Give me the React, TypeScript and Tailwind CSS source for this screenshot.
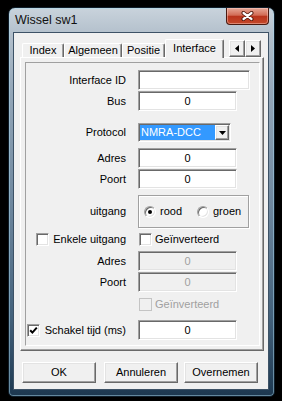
import React from "react";

const SUNKEN =
  "border border-t-[#a0a0a0] border-l-[#a0a0a0] border-b-white border-r-white shadow-[inset_1px_1px_0_#696969,inset_-1px_-1px_0_#e3e3e3]";
const RAISED =
  "border border-t-white border-l-white border-b-[#696969] border-r-[#696969] shadow-[inset_-1px_-1px_0_#a0a0a0,inset_1px_1px_0_#e3e3e3]";

function Label({ children }: { children: React.ReactNode }) {
  return (
    <div className="w-[100px] h-full flex items-center justify-end text-[11px] text-black whitespace-nowrap">
      {children}
    </div>
  );
}

function Field({
  value = "",
  wide = false,
  disabled = false,
}: {
  value?: string;
  wide?: boolean;
  disabled?: boolean;
}) {
  return (
    <div
      className={`${wide ? "w-[112px]" : "w-[99px]"} h-[20px] ${SUNKEN} ${
        disabled ? "bg-[#f0f0f0] text-[#a0a0a0]" : "bg-white text-black"
      } flex items-center justify-center text-[11px]`}
    >
      {value}
    </div>
  );
}

function Check({ checked = false, disabled = false }: { checked?: boolean; disabled?: boolean }) {
  return (
    <div
      className={`w-[13px] h-[13px] shrink-0 flex items-center justify-center ${
        disabled
          ? "border border-[#c4c4c4] bg-[#f0f0f0]"
          : "bg-white " + SUNKEN
      }`}
    >
      {checked && (
        <svg width="9" height="9" viewBox="0 0 9 9">
          <path d="M1.2 4.2 L3.4 6.6 L7.8 1.6" stroke="#000" strokeWidth="2" fill="none" />
        </svg>
      )}
    </div>
  );
}

function Radio({ checked = false }: { checked?: boolean }) {
  return (
    <div className="w-[12px] h-[12px] rounded-full shrink-0 border border-t-[#a0a0a0] border-l-[#a0a0a0] border-b-white border-r-white shadow-[inset_1px_1px_0_#696969,inset_-1px_-1px_0_#e3e3e3] bg-white flex items-center justify-center">
      {checked && <div className="w-[4px] h-[4px] rounded-full bg-black" />}
    </div>
  );
}

function Tab({ label, w }: { label: string; w: string }) {
  return (
    <div
      className={`${w} h-[14px] border-l border-t border-r border-l-white border-t-white border-r-[#696969] rounded-t-[2px] shadow-[inset_-1px_0_0_#a0a0a0] flex items-center justify-center text-[11px] text-black`}
    >
      {label}
    </div>
  );
}

function ArrowBtn({ dir }: { dir: "left" | "right" }) {
  return (
    <div className={`w-[16px] h-[17px] bg-[#f0f0f0] ${RAISED} flex items-center justify-center`}>
      <svg width="4" height="7" viewBox="0 0 4 7">
        {dir === "left" ? <path d="M4 0 L0 3.5 L4 7 Z" fill="#000" /> : <path d="M0 0 L4 3.5 L0 7 Z" fill="#000" />}
      </svg>
    </div>
  );
}

function Btn({ label, cls }: { label: string; cls: string }) {
  return (
    <div
      className={`${cls} w-[74px] h-[21px] bg-[#f0f0f0] ${RAISED} flex items-center justify-center text-[11px] text-black`}
    >
      {label}
    </div>
  );
}

export default function App() {
  return (
    <div className="w-[282px] h-[401px] bg-black pt-[7px] pl-[8px] font-['Liberation_Sans',Arial,sans-serif]">
      <div className="w-[267px] h-[390px] rounded-t-[7px] rounded-b-[5px] border border-[#0f1d29] bg-[linear-gradient(180deg,#c9d3dc_0%,#b2bfcb_7%,#93a6b8_22%,#6f889f_50%,#43617b_80%,#1d3850_100%)] shadow-[inset_0_0_0_1px_rgba(170,215,235,0.5)] flex flex-col pl-[4px] pr-[5px] pb-[5px]">
        {/* title bar */}
        <div className="h-[24px] flex justify-between">
          <div className="self-center pl-[2px] text-[12.5px] text-[#111]">Wissel sw1</div>
          <div className="self-start w-[43px] h-[17px] rounded-b-[4px] border border-[#4a1a10] border-t-0 bg-[linear-gradient(180deg,#e7a898_0%,#d26c55_45%,#b9341c_52%,#c4492b_100%)] shadow-[inset_0_0_0_1px_rgba(255,210,200,0.45)] flex items-center justify-center">
            <svg width="13" height="10" viewBox="0 0 13 10">
              <path d="M2.5 2 L10.5 8 M10.5 2 L2.5 8" stroke="#4b1409" strokeWidth="4" strokeLinecap="round" />
              <path d="M2.5 2 L10.5 8 M10.5 2 L2.5 8" stroke="#ffffff" strokeWidth="2.2" strokeLinecap="round" />
            </svg>
          </div>
        </div>
        {/* client */}
        <div className="w-[256px] h-[358px] border border-[#3d5266] bg-[#f0f0f0] flex flex-col">
          <div className="ml-[6px] mt-[6px] w-[244px] flex flex-col">
            {/* tabs */}
            <div className="h-[18px] flex items-end relative z-10">
              <div className="ml-[2px]" />
              <Tab label="Index" w="w-[42px]" />
              <Tab label="Algemeen" w="w-[58px]" />
              <Tab label="Positie" w="w-[43px]" />
              <div className="w-[59px] h-[19px] mb-[-1px] bg-[#f0f0f0] border-l border-t border-r border-l-white border-t-white border-r-[#696969] rounded-t-[2px] shadow-[inset_-1px_0_0_#a0a0a0] flex items-center justify-center text-[11px] text-black pb-[2px]">
                Interface
              </div>
              <div className="ml-[5px] self-start mt-[1px] flex">
                <ArrowBtn dir="left" />
                <ArrowBtn dir="right" />
              </div>
            </div>
            {/* panel */}
            <div className="w-[244px] h-[294px] border border-t-white border-l-white border-b-[#696969] border-r-[#696969] shadow-[inset_-1px_-1px_0_#a0a0a0] pl-[4px] pt-[4px]">
              <div className="w-[235px] h-[284px] border border-t-[#a0a0a0] border-l-[#a0a0a0] border-b-white border-r-white flex flex-col">
                <div className="mt-[7px] h-[20px] flex items-center gap-[12px]">
                  <Label>Interface ID</Label>
                  <Field wide />
                </div>
                <div className="mt-[1px] h-[20px] flex items-center gap-[12px]">
                  <Label>Bus</Label>
                  <Field value="0" />
                </div>
                <div className="mt-[12px] h-[19px] flex items-center gap-[12px]">
                  <Label>Protocol</Label>
                  <div className={`w-[93px] h-[19px] bg-white ${SUNKEN} flex p-[1px]`}>
                    <div className="flex-1 bg-[#3399ff] text-white text-[11px] flex items-center pl-[1px] whitespace-nowrap">
                      NMRA-DCC
                    </div>
                    <div className={`w-[14px] bg-[#f0f0f0] ${RAISED} flex items-center justify-center`}>
                      <svg width="7" height="4" viewBox="0 0 7 4">
                        <path d="M0 0 L7 0 L3.5 4 Z" fill="#000" />
                      </svg>
                    </div>
                  </div>
                </div>
                <div className="mt-[6px] h-[20px] flex items-center gap-[12px]">
                  <Label>Adres</Label>
                  <Field value="0" />
                </div>
                <div className="mt-[1px] h-[20px] flex items-center gap-[12px]">
                  <Label>Poort</Label>
                  <Field value="0" />
                </div>
                <div className="mt-[6px] h-[33px] flex items-center gap-[12px]">
                  <Label>uitgang</Label>
                  <div className="w-[111px] h-[33px] border border-[#a0a0a0] shadow-[1px_1px_0_#ffffff,inset_1px_1px_0_#ffffff] flex items-center pl-[5px] text-[11px] text-black">
                    <div className="w-[53px] flex items-center gap-[4px]">
                      <Radio checked />
                      <span>rood</span>
                    </div>
                    <div className="flex items-center gap-[4px]">
                      <Radio />
                      <span>groen</span>
                    </div>
                  </div>
                </div>
                <div className="mt-[5px] h-[13px] flex items-center gap-[12px]">
                  <Label>
                    <div className="flex items-center gap-[4px]">
                      <Check />
                      <span>Enkele uitgang</span>
                    </div>
                  </Label>
                  <div className="ml-[1px] flex items-center gap-[3px] text-[11px] text-black">
                    <Check />
                    <span>Geïnverteerd</span>
                  </div>
                </div>
                <div className="mt-[5px] h-[20px] flex items-center gap-[12px]">
                  <Label>Adres</Label>
                  <Field value="0" disabled />
                </div>
                <div className="mt-[1px] h-[20px] flex items-center gap-[12px]">
                  <Label>Poort</Label>
                  <Field value="0" disabled />
                </div>
                <div className="mt-[6px] h-[13px] flex items-center gap-[12px]">
                  <div className="w-[100px]" />
                  <div className="ml-[1px] flex items-center gap-[3px] text-[11px] text-[#a0a0a0]">
                    <Check disabled />
                    <span>Geïnverteerd</span>
                  </div>
                </div>
                <div className="mt-[9px] h-[20px] flex items-center gap-[12px]">
                  <Label>
                    <div className="flex items-center gap-[5px]">
                      <Check checked />
                      <span>Schakel tijd (ms)</span>
                    </div>
                  </Label>
                  <Field value="0" />
                </div>
              </div>
            </div>
          </div>
          {/* buttons */}
          <div className="mt-[11px] flex">
            <Btn label="OK" cls="ml-[8px]" />
            <Btn label="Annuleren" cls="ml-[8px]" />
            <Btn label="Overnemen" cls="ml-[6px]" />
          </div>
        </div>
      </div>
    </div>
  );
}
